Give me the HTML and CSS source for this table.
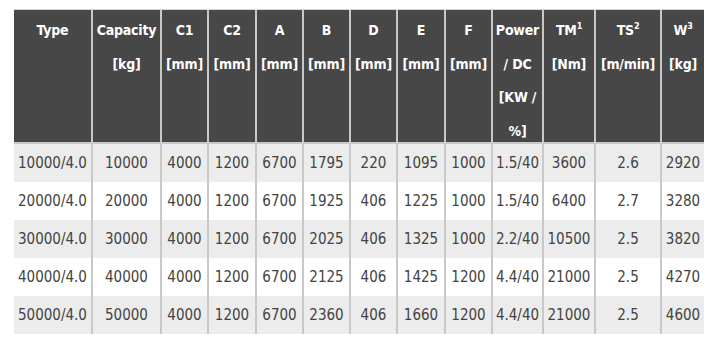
FILE: index.html
```html
<!DOCTYPE html>
<html>
<head>
<meta charset="utf-8">
<link rel="stylesheet" href="styles.css">
</head>
<body>
<div class="wrap">
<table class="spec">
<colgroup>
<col class="c-type"><col class="c-cap"><col class="c-47"><col class="c-48"><col class="c-47"><col class="c-47"><col class="c-47"><col class="c-48"><col class="c-47"><col class="c-pow"><col class="c-tm"><col class="c-ts"><col class="c-w">
</colgroup>
<thead>
<tr>
<th><div class="h">Type</div></th>
<th><div class="h">Capacity<br>[kg]</div></th>
<th><div class="h">C1<br>[mm]</div></th>
<th><div class="h">C2<br>[mm]</div></th>
<th><div class="h">A<br>[mm]</div></th>
<th><div class="h">B<br>[mm]</div></th>
<th><div class="h">D<br>[mm]</div></th>
<th><div class="h">E<br>[mm]</div></th>
<th><div class="h">F<br>[mm]</div></th>
<th><div class="h">Power<br>/ DC<br>[KW /<br>%]</div></th>
<th><div class="h">TM<sup>1</sup><br>[Nm]</div></th>
<th><div class="h">TS<sup>2</sup><br>[m/min]</div></th>
<th class="last"><div class="h">W<sup>3</sup><br>[kg]</div></th>
</tr>
</thead>
<tbody>
<tr><td>10000/4.0</td><td>10000</td><td>4000</td><td>1200</td><td>6700</td><td>1795</td><td>220</td><td>1095</td><td>1000</td><td>1.5/40</td><td>3600</td><td>2.6</td><td class="last">2920</td></tr>
<tr><td>20000/4.0</td><td>20000</td><td>4000</td><td>1200</td><td>6700</td><td>1925</td><td>406</td><td>1225</td><td>1000</td><td>1.5/40</td><td>6400</td><td>2.7</td><td class="last">3280</td></tr>
<tr><td>30000/4.0</td><td>30000</td><td>4000</td><td>1200</td><td>6700</td><td>2025</td><td>406</td><td>1325</td><td>1000</td><td>2.2/40</td><td>10500</td><td>2.5</td><td class="last">3820</td></tr>
<tr><td>40000/4.0</td><td>40000</td><td>4000</td><td>1200</td><td>6700</td><td>2125</td><td>406</td><td>1425</td><td>1200</td><td>4.4/40</td><td>21000</td><td>2.5</td><td class="last">4270</td></tr>
<tr><td>50000/4.0</td><td>50000</td><td>4000</td><td>1200</td><td>6700</td><td>2360</td><td>406</td><td>1660</td><td>1200</td><td>4.4/40</td><td>21000</td><td>2.5</td><td class="last">4600</td></tr>
</tbody>
</table>
</div>
</body>
</html>
```

FILE: styles.css
```css
html, body {
  margin: 0;
  padding: 0;
  background: #ffffff;
}
.wrap {
  padding: 9px 0 0 14px;
}
.spec {
  table-layout: fixed;
  width: 690px;
  border-collapse: separate;
  border-spacing: 0;
  font-family: "DejaVu Sans Condensed", "DejaVu Sans", sans-serif;
  font-stretch: condensed;
  border-top: 1px solid #d6d6d6;
}
.c-type { width: 79px; }
.c-cap { width: 69px; }
.c-47 { width: 47px; }
.c-48 { width: 48px; }
.c-pow { width: 51px; }
.c-tm { width: 52px; }
.c-ts { width: 66px; }
.c-w { width: 42px; }
.spec th, .spec td {
  box-sizing: border-box;
  padding: 0;
  text-align: center;
  border-right: 2px solid #c8c8c8;
  white-space: nowrap;
  overflow: visible;
}
.spec th.last, .spec td.last {
  border-right: none;
}
.spec th {
  background: #474747;
  color: #ffffff;
  font-weight: bold;
  font-size: 14px;
  letter-spacing: -0.2px;
  vertical-align: top;
  border-bottom: 2px solid #c8c8c8;
}
.h {
  height: 128px;
  margin-top: 4px;
  line-height: 33.5px;
}
.h sup {
  font-size: 9px;
  line-height: 0;
  vertical-align: 6px;
}
.spec td {
  height: 38px;
  font-size: 15px;
  color: #434343;
  vertical-align: middle;
}
.spec tbody tr:nth-child(odd) td {
  background: #ececec;
}
.spec tbody tr:nth-child(even) td {
  background: #ffffff;
}
```
